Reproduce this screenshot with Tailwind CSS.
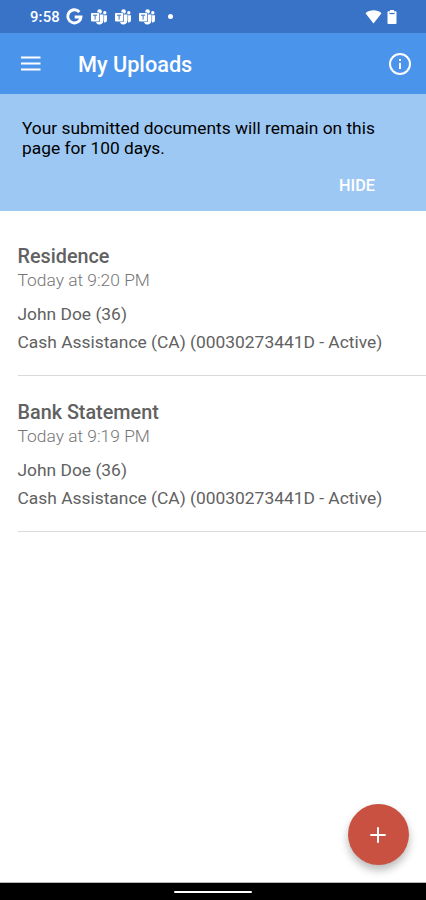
<!DOCTYPE html>
<html lang="en">
<head>
<meta charset="utf-8">
<title>My Uploads</title>
<script src="https://cdn.jsdelivr.net/npm/@tailwindcss/browser@4"></script>
</head>
<body class="bg-white">
<svg class="hidden">
  <symbol id="teams" viewBox="0 0 16 16">
    <circle cx="8.6" cy="2.6" r="2.3" fill="#fff"/>
    <circle cx="13.8" cy="3.7" r="1.7" fill="#fff"/>
    <path d="M5.5 5.5h7v6a4 4 0 0 1-7.2 2.4z" fill="#fff"/>
    <path d="M13.1 6.2h2.9v4.6a2.7 2.7 0 0 1-3 2.6z" fill="#fff"/>
    <rect x="-.1" y="3.4" width="9" height="9.6" rx="1" fill="#3973c8"/>
    <rect x="0" y="4" width="8.2" height="8.4" rx=".8" fill="#fff"/>
    <path d="M2.1 6.2h4M4.1 6.2v4.4" stroke="#3973c8" stroke-width="1"/>
  </symbol>
</svg>
<div class="relative flex h-[900px] w-[426px] flex-col overflow-hidden bg-white font-['Roboto','Liberation_Sans',sans-serif]">
  <header class="flex h-[33px] shrink-0 items-center bg-[#3973c8] pl-[30px] pr-[29px] text-white">
    <span class="w-[36px] text-[14.8px] font-medium leading-[16px] tracking-[0.2px] whitespace-nowrap">9:58</span>
    <svg class="h-[17px] w-[17px]" viewBox="0 0 17 17" fill="none" stroke="#fff" stroke-width="2.8"><path d="M13.4 4A6.6 6.6 0 1 0 15 9H8.7"/></svg>
    <div class="ml-[8px] flex gap-[8px]">
      <svg class="h-4 w-4"><use href="#teams"/></svg>
      <svg class="h-4 w-4"><use href="#teams"/></svg>
      <svg class="h-4 w-4"><use href="#teams"/></svg>
    </div>
    <span class="ml-[13px] size-[5px] rounded-full bg-white"></span>
    <svg class="ml-auto h-[14px] w-[17px]" viewBox="0 0 17 14"><path d="M.5 3.2C5-.6 12-.6 16.500 3.200L8.500 13.500z" fill="#fff"/></svg>
    <svg class="ml-[5px] h-[14px] w-[10px]" viewBox="0 0 10 14"><path d="M3 0h4v1.300h1.500q1 0 1 1V13q0 1-1 1h-7q-1 0-1-1V2.300q0-1 1-1H3z" fill="#fff"/><path d="M2.300 3.500h5.400" stroke="#3973c8" stroke-width="1.200"/></svg>
  </header>
  <nav class="flex h-[61px] shrink-0 items-center bg-[#4a94ec] pl-[21px] pr-[14px] text-white">
    <svg class="h-[15px] w-[20px]" viewBox="0 0 20 15" stroke="#fff" stroke-width="2.200"><path d="M0 1.500h19.500M0 7.500h19.500M0 13.500h19.500"/></svg>
    <h1 class="ml-[37px] pt-[3px] text-[21.7px] font-medium leading-[26px] whitespace-nowrap">My Uploads</h1>
    <svg class="ml-auto size-6" viewBox="0 0 24 24" fill="none" stroke="#fff" stroke-width="2"><circle cx="12" cy="12" r="10"/><path d="M12 10.800v6.200M12 7v2"/></svg>
  </nav>
  <section class="flex h-[117px] shrink-0 flex-col bg-[#9dc8f3] pl-[22px] pr-[51px] pt-[24px] text-black">
    <p class="text-[17.35px] leading-[20px] whitespace-nowrap">Your submitted documents will remain on this<br>page for 100 days.</p>
    <button class="mt-[18px] self-end text-[16.3px] font-medium leading-[20px] text-white">HIDE</button>
  </section>
  <main class="flex-1 pl-[17.5px] pt-[33px] text-[#616161]">
    <article class="h-[132px] border-b border-[#d9d9d9] whitespace-nowrap">
      <h2 class="pt-px text-[19.8px] font-medium leading-[24px]">Residence</h2>
      <p class="text-[17.4px] font-light leading-[22px] text-[#757575]">Today at 9:20 PM</p>
      <p class="mt-[12px] text-[17.4px] leading-[22px]">John Doe (36)</p>
      <p class="mt-[6px] text-[17.4px] leading-[22px]">Cash Assistance (CA) (00030273441D - Active)</p>
    </article>
    <article class="mt-[24px] h-[132px] border-b border-[#d9d9d9] whitespace-nowrap">
      <h2 class="pt-px text-[19.8px] font-medium leading-[24px]">Bank Statement</h2>
      <p class="text-[17.4px] font-light leading-[22px] text-[#757575]">Today at 9:19 PM</p>
      <p class="mt-[12px] text-[17.4px] leading-[22px]">John Doe (36)</p>
      <p class="mt-[6px] text-[17.4px] leading-[22px]">Cash Assistance (CA) (00030273441D - Active)</p>
    </article>
  </main>
  <button aria-label="Add" class="absolute left-[348px] top-[804px] flex size-[61px] items-center justify-center rounded-full bg-[#c95142] pr-px shadow-[0_5px_9px_rgba(0,0,0,0.28)]">
    <svg class="size-4" viewBox="0 0 16 16" stroke="#fff" stroke-width="2"><path d="M8 .3v15.400M.3 8h15.400"/></svg>
  </button>
  <footer class="flex h-[18px] shrink-0 justify-center border-t border-[#b8b8b8] bg-black pt-[8px]">
    <span class="h-[2px] w-[78px] rounded-full bg-white"></span>
  </footer>
</div>
</body>
</html>
